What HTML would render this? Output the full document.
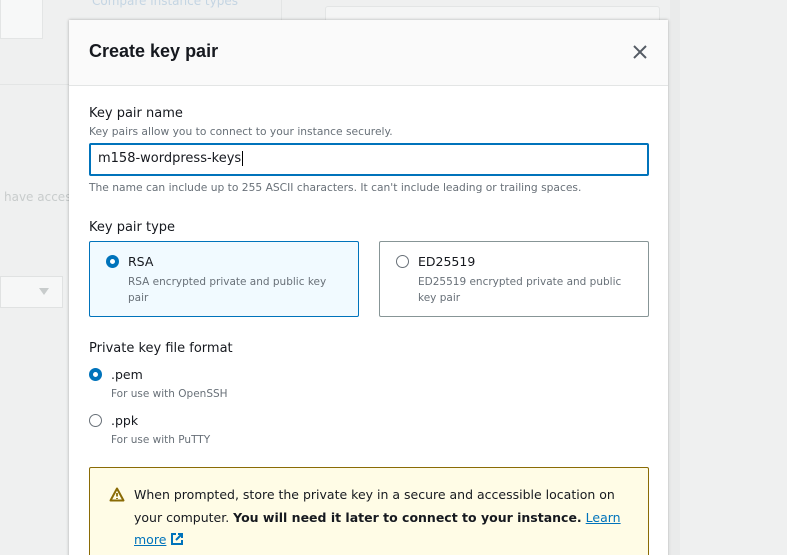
<!DOCTYPE html><html style="height:555px;overflow:hidden"><head><style>
body{margin:0;width:787px;height:555px;overflow:hidden;background:#eff0f0;font-family:"DejaVu Sans",sans-serif;position:relative;color:#16191f}
.a{position:absolute}
.m{left:69px;top:20px;width:599px;height:540px;background:#fff;box-shadow:0 0 3px rgba(0,0,0,.3)}
.h{left:0;top:0;width:599px;height:65px;background:#fafafa;border-bottom:1px solid #e3e5e5}
.lab{font-size:13px;color:#16191f}
.sm{font-size:10.7px;color:#687078}
.card{border:1px solid #879596;border-radius:2px;width:268px;height:74px}
.rad{width:11px;height:11px;border-radius:50%;border:1px solid #687078;background:#fff}
.on{border:4px solid #0073bb;width:5px;height:5px}
</style></head><body>
<div class="a" style="left:0;top:0;width:41px;height:38px;background:#f7f8f8;border:1px solid #e3e5e5;border-top:0"></div>
<div class="a" style="left:92px;top:-6px;font-size:12px;color:#c4d5e3">Compare instance types</div>
<div class="a" style="left:281px;top:0;width:1px;height:40px;background:#e3e5e5"></div>
<div class="a" style="left:325px;top:6px;width:333px;height:40px;border:1px solid #e3e5e5;border-radius:3px;background:#f4f5f5"></div>
<div class="a" style="left:0;top:84px;width:69px;height:1px;background:#e3e5e5"></div>
<div class="a" style="left:4px;top:190px;font-size:12px;color:#c8cccc">have acces</div>
<div class="a" style="left:0;top:276px;width:61px;height:30px;border:1px solid #e0e2e2;background:#f6f7f7"></div>
<div class="a" style="left:39px;top:288px;border-left:5px solid transparent;border-right:5px solid transparent;border-top:7px solid #c8cccc"></div>
<div class="a" style="left:670px;top:0;width:10px;height:555px;background:#eaebeb"></div>
<div class="a m">
<div class="a h"></div>
<div class="a" style="left:20px;top:21px;font-size:18px;font-weight:bold;font-family:'Liberation Sans',sans-serif">Create key pair</div>
<svg class="a" style="left:563px;top:24px" width="16" height="16"><path d="M2 2L14 14M14 2L2 14" stroke="#545b64" stroke-width="2"/></svg>
<div class="a lab" style="left:20px;top:86px">Key pair name</div>
<div class="a sm" style="left:20px;top:105px">Key pairs allow you to connect to your instance securely.</div>
<div class="a" style="left:20px;top:123px;width:556px;height:29px;border:2px solid #0073bb;border-radius:2px"></div>
<div class="a" style="left:29px;top:131px;font-size:13px">m158-wordpress-keys<span style="border-left:1px solid #000;margin-left:1px"></span></div>
<div class="a sm" style="left:20px;top:161px">The name can include up to 255 ASCII characters. It can't include leading or trailing spaces.</div>
<div class="a lab" style="left:20px;top:200px">Key pair type</div>
<div class="a card" style="left:20px;top:221px;background:#f1faff;border-color:#0073bb"></div>
<div class="a rad on" style="left:37px;top:235px"></div>
<div class="a" style="left:59px;top:234px;font-size:12.5px">RSA</div>
<div class="a sm" style="left:59px;top:254px;width:215px;line-height:16px;font-size:10.5px">RSA encrypted private and public key pair</div>
<div class="a card" style="left:310px;top:221px"></div>
<div class="a rad" style="left:327px;top:235px"></div>
<div class="a" style="left:349px;top:234px;font-size:12.5px">ED25519</div>
<div class="a sm" style="left:349px;top:254px;width:215px;line-height:16px;font-size:10.5px">ED25519 encrypted private and public key pair</div>
<div class="a lab" style="left:20px;top:321px">Private key file format</div>
<div class="a rad on" style="left:20px;top:348px"></div>
<div class="a" style="left:42px;top:347px;font-size:12.5px">.pem</div>
<div class="a sm" style="left:42px;top:368px;font-size:10.5px">For use with OpenSSH</div>
<div class="a rad" style="left:20px;top:394px"></div>
<div class="a" style="left:42px;top:393px;font-size:12.5px">.ppk</div>
<div class="a sm" style="left:42px;top:414px;font-size:10.5px">For use with PuTTY</div>
<div class="a" style="left:20px;top:447px;width:558px;height:100px;background:#fffce6;border:1px solid #8a6b05;border-radius:2px"></div>
<svg class="a" style="left:40px;top:467px" width="16" height="15"><path d="M8 1.5L14.5 13.5H1.5Z" fill="none" stroke="#8a6b05" stroke-width="2" stroke-linejoin="round"/><path d="M8 6V9.5M8 11v1" stroke="#8a6b05" stroke-width="1.8"/></svg>
<div class="a" style="left:65px;top:464px;width:500px;font-size:12.5px;line-height:22.5px;color:#16191f">When prompted, store the private key in a secure and accessible location on<br>your computer. <b>You will need it later to connect to your instance.</b> <span style="color:#0073bb;text-decoration:underline">Learn</span><br><span style="color:#0073bb;text-decoration:underline">more</span> <svg width="14" height="14" style="vertical-align:-2px"><path d="M6 2H2V12H12V8M8 2H12V6M12 2L6 8" fill="none" stroke="#0073bb" stroke-width="2"/></svg></div>
</div>
</body></html>
